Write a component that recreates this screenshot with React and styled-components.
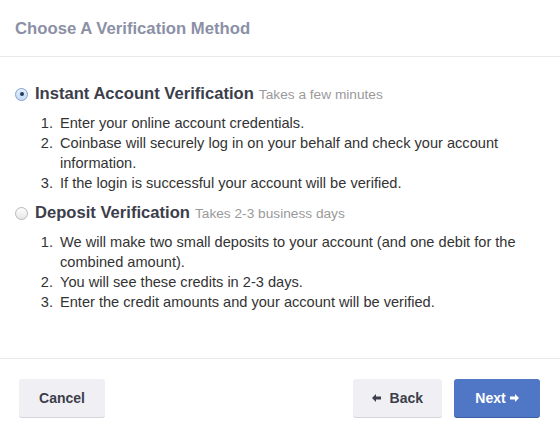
import styled, { createGlobalStyle } from 'styled-components';

const GlobalStyle = createGlobalStyle`
  html, body {
    margin: 0;
    padding: 0;
    background: #fff;
  }
  body {
    font-family: 'Liberation Sans', Arial, sans-serif;
    color: #333;
  }
`;

const methods = [
  {
    id: 'instant',
    title: 'Instant Account Verification',
    hint: 'Takes a few minutes',
    checked: true,
    steps: [
      'Enter your online account credentials.',
      'Coinbase will securely log in on your behalf and check your account information.',
      'If the login is successful your account will be verified.',
    ],
  },
  {
    id: 'deposit',
    title: 'Deposit Verification',
    hint: 'Takes 2-3 business days',
    checked: false,
    steps: [
      'We will make two small deposits to your account (and one debit for the combined amount).',
      'You will see these credits in 2-3 days.',
      'Enter the credit amounts and your account will be verified.',
    ],
  },
];

const Radio = ({ checked }) => (
  <RadioBox checked={checked}>{checked && <RadioDot />}</RadioBox>
);

const RadioBox = styled.span`
  width: 13px;
  height: 13px;
  border-radius: 50%;
  box-sizing: border-box;
  border: 1px solid ${(p) => (p.checked ? '#7f9fd0' : '#b8b8b8')};
  background: ${(p) =>
    p.checked
      ? 'linear-gradient(#e3eefb, #c4daf5)'
      : 'linear-gradient(#fdfdfd, #e6e6e6)'};
  display: flex;
  align-items: center;
  justify-content: center;
  flex-shrink: 0;
`;

const RadioDot = styled.span`
  width: 4px;
  height: 4px;
  border-radius: 50%;
  background: #243a5e;
`;

// arrow glyphs on the footer buttons
const ArrowLeft = () => (
  <svg width="9" height="8" viewBox="0 0 9 8">
    <path d="M0 4 L4 0 V2.6 H9 V5.4 H4 V8 Z" fill="currentColor" />
  </svg>
);

const ArrowRight = () => (
  <svg width="9" height="8" viewBox="0 0 9 8">
    <path d="M9 4 L5 0 V2.6 H0 V5.4 H5 V8 Z" fill="currentColor" />
  </svg>
);

const App = () => {
  return (
    <Modal>
      <GlobalStyle />
      <Header>
        <Heading>Choose A Verification Method</Heading>
      </Header>
      <Body>
        {methods.map((m) => (
          <Method key={m.id}>
            <MethodLabel>
              <Radio checked={m.checked} />
              <MethodTitle>{m.title}</MethodTitle>
              <MethodHint>{m.hint}</MethodHint>
            </MethodLabel>
            <Steps>
              {m.steps.map((s) => (
                <li key={s}>{s}</li>
              ))}
            </Steps>
          </Method>
        ))}
      </Body>
      <Footer>
        <Button>Cancel</Button>
        <ButtonGroup>
          <Button gap={9}>
            <ArrowLeft />
            Back
          </Button>
          <Button primary gap={4}>
            Next
            <ArrowRight />
          </Button>
        </ButtonGroup>
      </Footer>
    </Modal>
  );
};

const Modal = styled.div`
  width: 560px;
  height: 438px;
  display: flex;
  flex-direction: column;
  background: #fff;
`;

const Header = styled.div`
  height: 57px;
  box-sizing: border-box;
  padding: 2px 15px 0;
  display: flex;
  align-items: center;
  border-bottom: 1px solid #e9e9ec;
`;

const Heading = styled.h3`
  margin: 0;
  font-size: 16.7px;
  font-weight: bold;
  color: #8b90a6;
`;

const Body = styled.div`
  flex: 1;
  padding: 25px 15px 0;
  border-bottom: 1px solid #e9e9ec;
`;

const Method = styled.div`
  margin-bottom: 8px;
`;

const MethodLabel = styled.label`
  display: flex;
  align-items: center;
  gap: 7px;
  height: 24px;
`;

const MethodTitle = styled.span`
  font-size: 16.6px;
  font-weight: bold;
  color: #3c3e4b;
`;

const MethodHint = styled.span`
  font-size: 13.7px;
  color: #9a9a9a;
  margin-left: -2px;
  padding-top: 1px;
`;

const Steps = styled.ol`
  margin: 7px 0 0;
  padding-left: 42px;
  font-size: 14.6px;
  line-height: 20px;
  color: #333;

  li {
    padding-left: 3px;
  }
`;

const Footer = styled.div`
  height: 79px;
  box-sizing: border-box;
  padding: 20px 20px 0 19px;
  display: flex;
  justify-content: space-between;
  align-items: flex-start;
`;

const ButtonGroup = styled.div`
  display: flex;
  gap: 12px;
`;

const Button = styled.button`
  height: 38px;
  min-width: 86px;
  padding: 0 19px;
  display: flex;
  align-items: center;
  justify-content: center;
  gap: ${(p) => p.gap || 5}px;
  font-family: 'Liberation Sans', Arial, sans-serif;
  font-size: 14px;
  font-weight: bold;
  border-radius: 3px;
  border: none;
  cursor: pointer;
  color: ${(p) => (p.primary ? '#fff' : '#3c3e4b')};
  background: ${(p) => (p.primary ? '#5077c5' : '#f0f0f4')};
  box-shadow: 0 1px 0 ${(p) => (p.primary ? '#3b5ea6' : '#d4d4da')};
`;

export default App;
